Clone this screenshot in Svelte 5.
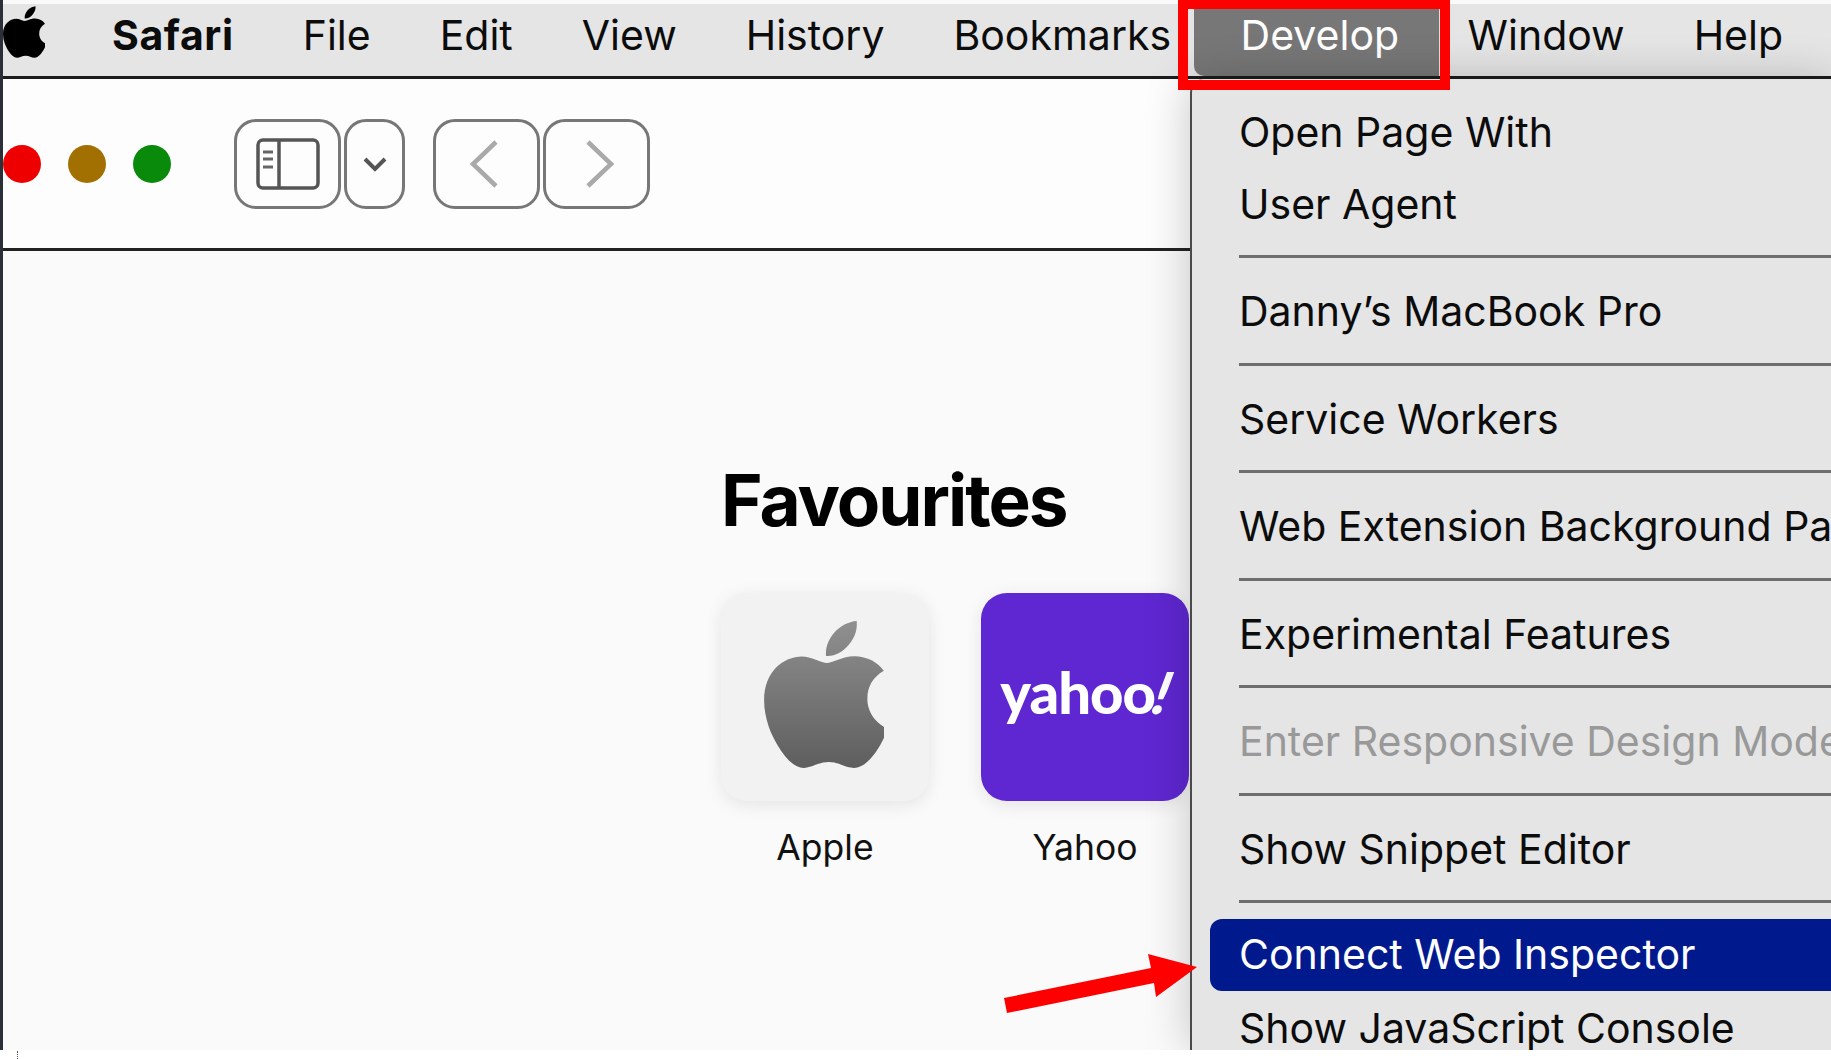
<script>
    const menus = ["File", "Edit", "View", "History", "Bookmarks"];
    const applePath =
        "M318.7 268.7c-.2-36.7 16.4-64.4 50-84.8-18.8-26.9-47.2-41.7-84.7-44.6-35.5-2.8-74.3 20.7-88.5 20.7-15 0-49.4-19.7-76.4-19.7C63.3 141.2 4 184.8 4 273.5q0 39.3 14.4 81.2c12.8 36.7 59 126.7 107.2 125.2 25.2-.6 43-17.9 75.8-17.9 31.8 0 48.3 17.9 76.4 17.9 48.6-.7 90.4-82.5 102.6-119.3-65.2-30.7-61.7-90-61.7-91.9zm-56.6-164.2c27.3-32.4 24.8-61.9 24-72.5-24.1 1.4-52 16.4-67.9 34.9-17.5 19.8-27.8 44.3-25.6 71.9 26.1 2 49.9-11.4 69.5-34.3z";
    const groups = [
        ["Open Page With", "User Agent"],
        ["Danny’s MacBook Pro"],
        ["Service Workers"],
        ["Web Extension Background Pages"],
        ["Experimental Features"],
        ["Enter Responsive Design Mode"],
        ["Show Snippet Editor"],
        ["Connect Web Inspector", "Show JavaScript Console"],
    ];
</script>

<div class="page">
    <div class="menubar">
        <svg class="bar-apple" viewBox="4 32 365 448"><path d={applePath} /></svg>
        <span class="item app">Safari</span>
        {#each menus as m}
            <span class="item">{m}</span>
        {/each}
        <span class="item develop">Develop</span>
        <span class="item">Window</span>
        <span class="item">Help</span>
    </div>

    <div class="toolbar">
        <div class="lights">
            <span class="light red"></span>
            <span class="light amber"></span>
            <span class="light green"></span>
        </div>
        <div class="btn sidebar">
            <svg width="64" height="52" viewBox="0 0 64 52" fill="none" stroke="#555" stroke-width="3.5">
                <rect x="2" y="2" width="60" height="48" rx="5" />
                <path d="M23 2v48" />
                <path d="M7 14h10M7 21h10M7 29h10" stroke-width="3" stroke="#666" />
            </svg>
        </div>
        <div class="btn chevron">
            <svg width="24" height="16" viewBox="0 0 24 16" fill="none" stroke="#555" stroke-width="4">
                <path d="M2 3l10 10L22 3" />
            </svg>
        </div>
        <div class="btn nav back">
            <svg width="28" height="48" viewBox="0 0 28 48" fill="none" stroke="#a9a9a9" stroke-width="4.5">
                <path d="M26 2L3 24l23 22" />
            </svg>
        </div>
        <div class="btn nav forward">
            <svg width="28" height="48" viewBox="0 0 28 48" fill="none" stroke="#a9a9a9" stroke-width="4.5">
                <path d="M2 2l23 22L2 46" />
            </svg>
        </div>
    </div>

    <div class="content">
        <h1>Favourites</h1>
        <div class="tiles">
            <div class="fav">
                <div class="tile apple">
                    <svg width="120" height="147" viewBox="4 32 365 448">
                        <defs>
                            <linearGradient id="grey" x1="0" y1="0" x2="0" y2="1">
                                <stop offset="0" stop-color="#909090" />
                                <stop offset="1" stop-color="#5e5e5e" />
                            </linearGradient>
                        </defs>
                        <path d={applePath} fill="url(#grey)" />
                    </svg>
                </div>
                <span>Apple</span>
            </div>
            <div class="fav">
                <div class="tile yahoo"><b>yahoo<i>!</i></b></div>
                <span>Yahoo</span>
            </div>
        </div>
    </div>

    <div class="dropdown">
        {#each groups as group, g}
            {#if g > 0}<div class="sep"></div>{/if}
            {#each group as label}
                <div
                    class="row"
                    class:off={label.startsWith("Enter")}
                    class:active={label.startsWith("Connect")}
                >
                    {label}
                </div>
            {/each}
        {/each}
    </div>

    <div class="redbox"></div>
    <svg class="arrow" width="200" height="64" viewBox="1002 952 200 64">
        <path d="M1004 998l147-30-3-14 49 13-41 30-2-14-147 30z" fill="#f00" />
    </svg>
</div>
<div class="foot"><span></span></div>

<style>
    :global(body) {
        background: #fff;
        font-family: Inter, "Liberation Sans", sans-serif;
        overflow: hidden;
    }
    .page {
        position: relative;
        height: 1050px;
        overflow: hidden;
        background: #fafafa;
        border-left: 3px solid #2b2f38;
        box-sizing: border-box;
        padding-top: 4px;
    }
    .menubar {
        height: 72px;
        display: flex;
        align-items: center;
        background: #e5e5e5;
        border-bottom: 3px solid #1c1c1c;
        color: #0c0c0c;
        font-size: 41px;
        white-space: nowrap;
    }
    .bar-apple {
        width: 42px;
        height: 52px;
        flex: none;
        margin-top: -16px;
    }
    .item {
        padding: 0 34.5px;
        margin-top: -10px;
    }
    .app {
        font-weight: 700;
        margin-left: 32.5px;
        letter-spacing: 0.6px;
    }
    .develop {
        align-self: stretch;
        display: flex;
        align-items: center;
        background: #777;
        color: #fff;
        border-radius: 0 0 0 10px;
        margin-top: 5px;
        padding: 0 40px 15px 47px;
        margin-left: -12px;
        margin-right: -6px;
    }
    .toolbar {
        height: 172px;
        display: flex;
        align-items: center;
        background: #fdfdfd;
        border-bottom: 3px solid #222;
        box-sizing: border-box;
    }
    .lights {
        display: flex;
        gap: 27px;
        margin-right: 63px;
    }
    .light {
        width: 38px;
        height: 38px;
        border-radius: 50%;
    }
    .red {
        background: #ee0000;
    }
    .amber {
        background: #a27000;
    }
    .green {
        background: #0a8a0a;
    }
    .btn {
        height: 90px;
        box-sizing: border-box;
        border: 3px solid #777;
        border-radius: 22px;
        display: flex;
        align-items: center;
        justify-content: center;
    }
    .sidebar {
        width: 107px;
        margin-right: 3px;
    }
    .chevron {
        width: 61px;
        margin-right: 28px;
    }
    .nav {
        width: 107px;
        margin-right: 3px;
    }
    .back svg {
        margin-right: 6px;
    }
    .forward svg {
        margin-left: 6px;
    }
    .content {
        padding: 0 0 0 718px;
    }
    h1 {
        margin: 0;
        padding-top: 206px;
        font-size: 71px;
        line-height: 86px;
        font-weight: 700;
        color: #000;
        letter-spacing: -2px;
    }
    .tiles {
        display: flex;
        gap: 52px;
        margin-top: 50px;
    }
    .fav {
        width: 208px;
        display: flex;
        flex-direction: column;
        align-items: center;
        gap: 25px;
        font-size: 35.5px;
        line-height: 44px;
        color: #111;
    }
    .tile {
        width: 208px;
        height: 208px;
        border-radius: 26px;
        display: flex;
        align-items: center;
        justify-content: center;
        box-shadow: 0 4px 18px rgba(0, 0, 0, 0.09);
    }
    .apple {
        background: #f2f2f2;
    }
    .apple svg {
        margin: -5px 3px 0 0;
    }
    .yahoo {
        background: #5f27d1;
        color: #fff;
    }
    .yahoo b {
        font-family: Lato, sans-serif;
        font-weight: 900;
        font-size: 58px;
        letter-spacing: -1px;
        margin-top: -10px;
    }
    .yahoo i {
        display: inline-block;
        transform: skewX(-14deg);
    }
    .dropdown {
        position: absolute;
        top: 79px;
        left: 1187px;
        right: 0;
        bottom: 0;
        padding-top: 18px;
        background: #e5e5e5;
        border-left: 2.5px solid #4a4a4a;
        border-radius: 14px 0 0 0;
        box-shadow: 0 0 45px rgba(0, 0, 0, 0.22);
        color: #0c0c0c;
        font-size: 41px;
        white-space: nowrap;
        overflow: hidden;
    }
    .row {
        height: 71.5px;
        line-height: 71.5px;
        margin-left: 18px;
        padding-left: 29px;
        border-radius: 12px 0 0 12px;
    }
    .off {
        color: #999;
    }
    .active {
        background: #001a8e;
        color: #fff;
        margin-top: -2px;
        margin-bottom: 2px;
    }
    .sep {
        height: 3px;
        margin: 15px 0 18px 47px;
        background: #6e6e6e;
    }
    .redbox {
        position: absolute;
        top: -4px;
        left: 1175px;
        width: 272px;
        height: 94px;
        box-sizing: border-box;
        border: 10px solid #f00;
        border-top-width: 13px;
    }
    .arrow {
        position: absolute;
        top: 952px;
        left: 999px;
    }
    .foot {
        height: 9px;
        position: relative;
    }
    .foot span {
        position: absolute;
        left: 17px;
        top: 1px;
        height: 8px;
        border-left: 1px dotted #555;
    }
</style>
